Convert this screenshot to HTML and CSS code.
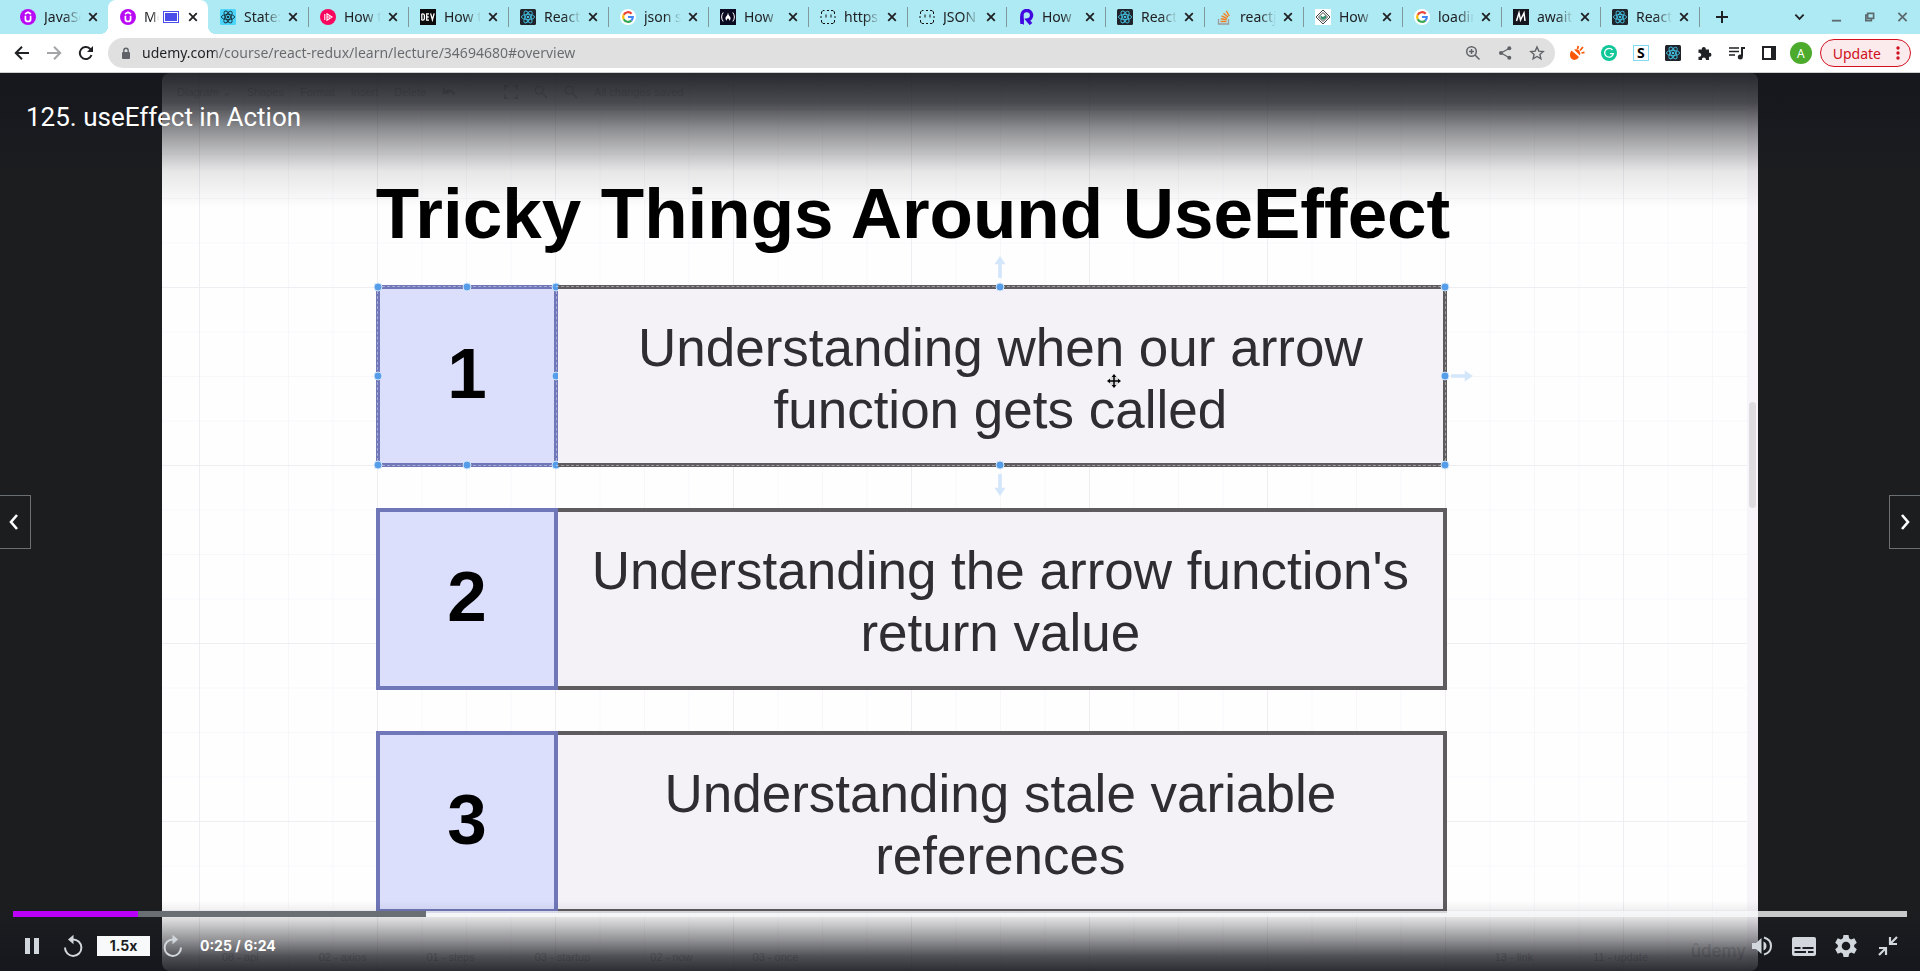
FILE: index.html
```html
<!DOCTYPE html>
<html lang="en">
<head>
<meta charset="utf-8">
<title>125. useEffect in Action</title>
<meta name="viewport" content="width=device-width, initial-scale=1">
<link rel="stylesheet" href="styles.css">
</head>
<body>
<svg class="defs" aria-hidden="true">
  <symbol id="x" viewBox="0 0 10 10"><path d="M1.2 1.2l7.6 7.6M8.8 1.2L1.2 8.8" fill="none" stroke="currentColor" stroke-width="1.8"/></symbol>
  <symbol id="udemy" viewBox="0 0 16 16"><circle cx="8" cy="8" r="8" fill="#b90af5"/><path d="M5.4 6.8v3.4q0 2.3 2.6 2.3t2.6-2.3V6.8M5 5l3-1.7L11 5" fill="none" stroke="#fff" stroke-width="1.7"/></symbol>
  <symbol id="atom" viewBox="0 0 16 16"><g fill="none" stroke="currentColor" stroke-width=".9"><ellipse cx="8" cy="8" rx="6.6" ry="2.6"/><ellipse cx="8" cy="8" rx="6.6" ry="2.6" transform="rotate(60 8 8)"/><ellipse cx="8" cy="8" rx="6.6" ry="2.6" transform="rotate(120 8 8)"/></g><circle cx="8" cy="8" r="1.3" fill="currentColor"/></symbol>
  <symbol id="react-light" viewBox="0 0 16 16"><rect width="16" height="16" rx="1.5" fill="#4bd5fb"/><use href="#atom" color="#17343d"/></symbol>
  <symbol id="react-dark" viewBox="0 0 16 16"><rect width="16" height="16" rx="1.5" fill="#20232a"/><use href="#atom" color="#43bfe0"/></symbol>
  <symbol id="google" viewBox="0 0 16 16"><circle cx="8" cy="8" r="8" fill="#fff"/><g fill="none" stroke-width="2.2"><path d="M11.6 4.7A4.9 4.9 0 0 0 3.7 5.8" stroke="#ea4335"/><path d="M3.7 5.8a4.9 4.9 0 0 0 0 4.4" stroke="#fbbc05"/><path d="M3.7 10.2a4.9 4.9 0 0 0 7.6 1.4" stroke="#34a853"/><path d="M11.3 11.6A4.9 4.9 0 0 0 12.8 8H8" stroke="#4285f4"/></g></symbol>
  <symbol id="video" viewBox="0 0 16 16"><circle cx="8" cy="8" r="8" fill="#f9075e"/><path d="M4.8 5v6M7 4.8v6.4L12 8zM7 8h3" fill="none" stroke="#fff" stroke-width="1.1"/></symbol>
  <symbol id="dev" viewBox="0 0 16 16"><rect width="16" height="16" fill="#0b0b0b"/><path d="M1.8 4.8v6.4M1.8 4.8h.9q1.7 0 1.7 1.7v3q0 1.7-1.7 1.7h-.9M9 4.8H6.7v6.4H9M6.7 8h2M10.6 4.4l1.8 6.4 1.8-6.4" fill="none" stroke="#fff" stroke-width="1.3"/></symbol>
  <symbol id="fcc" viewBox="0 0 16 16"><rect width="16" height="16" fill="#0a0a23"/><path d="M3.2 3.5Q0 8 3.2 12.5M12.8 3.5q3.2 4.5 0 9" fill="none" stroke="#fff" stroke-width="1"/><path d="M8 3.6q-.2 2.2-1.7 3.7-1.8 2 .1 4.4Q7 10 8 9.3q1 .7 1.600 2.400 1.900-2.400.1-4.400Q8.300 6 8 3.600z" fill="#fff"/></symbol>
  <symbol id="json" viewBox="0 0 16 16"><path d="M4.500 1.500H3L1.500 3v2M1 7v2M1.500 11v2L3 14.500h2M7 14.500h2M11 14.500h2l1.500-1.500v-2M15 7v2M14.500 5V3L13 1.500h-2M7 1.500h2" fill="none" stroke="#111" stroke-width="1"/><path d="M6 5.500v3M11 5.500v3" stroke="#111"/></symbol>
  <symbol id="rails" viewBox="0 0 16 16"><path d="M4 15V6.500A4.800 4.800 0 1 1 9.500 11L13 15" fill="none" stroke="#4208e0" stroke-width="3.400"/><circle cx="7.500" cy="6" r="1.500" fill="#aeeaf3"/><path d="M2.300 6.500V13l3.500 3v-6z" fill="#4208e0"/></symbol>
  <symbol id="stack" viewBox="0 0 16 16"><path d="M2.500 10v5h10v-5" fill="none" stroke="#9a9b9e" stroke-width="1.300"/><path d="M4.500 12.500h6M4.700 9.800l6 .9M5.600 7l5.500 2.400M7.500 4.200l4.600 3.900M10.300 1.800l3 5.200" stroke="#f48024" stroke-width="1.400" fill="none"/></symbol>
  <symbol id="diamond" viewBox="0 0 16 16"><rect width="16" height="16" fill="#fff"/><path d="M8 1l7 7-7 7-7-7zM8 3.500L12.500 8 8 12.500 3.500 8z" fill="none" stroke="#444"/><path d="M5.500 6.500L8 8l3-2v3l-3 2-2.500-2z" fill="#35906a"/></symbol>
  <symbol id="medium" viewBox="0 0 16 16"><rect width="16" height="16" fill="#15151d"/><path d="M3.500 12L6 4l1.500 7L11 4l1 8" fill="none" stroke="#fff" stroke-width="1.500"/></symbol>
  <symbol id="arrow" viewBox="0 0 24 24"><path d="M12 0l6 9h-4v15h-4V9H6z" fill="#d3e6fa"/></symbol>
</svg>

<header class="browser">
  <nav class="tabs" aria-label="Tabs">
    <div class="tab"><svg class="fav"><use href="#udemy"/></svg><span class="tab-name">JavaScript</span><button class="close" aria-label="Close tab"><svg><use href="#x"/></svg></button></div>
    <div class="tab active"><svg class="fav"><use href="#udemy"/></svg><span class="tab-name short">Modern</span><i class="pip"></i><button class="close" aria-label="Close tab"><svg><use href="#x"/></svg></button></div>
    <div class="tab"><svg class="fav"><use href="#react-light"/></svg><span class="tab-name">State:</span><button class="close" aria-label="Close tab"><svg><use href="#x"/></svg></button></div>
    <div class="tab sep"><svg class="fav"><use href="#video"/></svg><span class="tab-name">How to</span><button class="close" aria-label="Close tab"><svg><use href="#x"/></svg></button></div>
    <div class="tab sep"><svg class="fav"><use href="#dev"/></svg><span class="tab-name">How to</span><button class="close" aria-label="Close tab"><svg><use href="#x"/></svg></button></div>
    <div class="tab sep"><svg class="fav"><use href="#react-dark"/></svg><span class="tab-name">React</span><button class="close" aria-label="Close tab"><svg><use href="#x"/></svg></button></div>
    <div class="tab sep"><svg class="fav"><use href="#google"/></svg><span class="tab-name">json se</span><button class="close" aria-label="Close tab"><svg><use href="#x"/></svg></button></div>
    <div class="tab sep"><svg class="fav"><use href="#fcc"/></svg><span class="tab-name">How</span><button class="close" aria-label="Close tab"><svg><use href="#x"/></svg></button></div>
    <div class="tab sep"><svg class="fav"><use href="#json"/></svg><span class="tab-name">https:</span><button class="close" aria-label="Close tab"><svg><use href="#x"/></svg></button></div>
    <div class="tab sep"><svg class="fav"><use href="#json"/></svg><span class="tab-name">JSON</span><button class="close" aria-label="Close tab"><svg><use href="#x"/></svg></button></div>
    <div class="tab sep"><svg class="fav"><use href="#rails"/></svg><span class="tab-name">How</span><button class="close" aria-label="Close tab"><svg><use href="#x"/></svg></button></div>
    <div class="tab sep"><svg class="fav"><use href="#react-dark"/></svg><span class="tab-name">React</span><button class="close" aria-label="Close tab"><svg><use href="#x"/></svg></button></div>
    <div class="tab sep"><svg class="fav"><use href="#stack"/></svg><span class="tab-name">reactjs</span><button class="close" aria-label="Close tab"><svg><use href="#x"/></svg></button></div>
    <div class="tab sep"><svg class="fav"><use href="#diamond"/></svg><span class="tab-name">How</span><button class="close" aria-label="Close tab"><svg><use href="#x"/></svg></button></div>
    <div class="tab sep"><svg class="fav"><use href="#google"/></svg><span class="tab-name">loading</span><button class="close" aria-label="Close tab"><svg><use href="#x"/></svg></button></div>
    <div class="tab sep"><svg class="fav"><use href="#medium"/></svg><span class="tab-name">await</span><button class="close" aria-label="Close tab"><svg><use href="#x"/></svg></button></div>
    <div class="tab sep"><svg class="fav"><use href="#react-dark"/></svg><span class="tab-name">React</span><button class="close" aria-label="Close tab"><svg><use href="#x"/></svg></button></div>
    <button class="new-tab sep" aria-label="New tab"><svg viewBox="0 0 12 12"><path d="M6 0v12M0 6h12" stroke="currentColor" stroke-width="2"/></svg></button>
    <div class="window-controls">
      <button class="dark" aria-label="Search tabs"><svg viewBox="0 0 12 12"><path d="M1.500 3.500L6 8l4.500-4.500" fill="none" stroke="currentColor" stroke-width="2"/></svg></button>
      <button aria-label="Minimize"><svg viewBox="0 0 12 12"><path d="M1 10h10" stroke="currentColor" stroke-width="2"/></svg></button>
      <button aria-label="Restore"><svg viewBox="0 0 12 12"><path d="M4 2h6.500v5.500H4zM4 4H2v6h6V8" fill="none" stroke="currentColor" stroke-width="1.800"/></svg></button>
      <button aria-label="Close"><svg viewBox="0 0 12 12"><path d="M1.500 1.500l9 9M10.500 1.500l-9 9" stroke="currentColor" stroke-width="2"/></svg></button>
    </div>
  </nav>

  <div class="toolbar">
    <div class="history">
      <button aria-label="Back"><svg viewBox="0 0 16 16"><path d="M15 8H2M8 1.800L1.800 8 8 14.200" fill="none" stroke="currentColor" stroke-width="2"/></svg></button>
      <button class="off" aria-label="Forward"><svg viewBox="0 0 16 16"><path d="M1 8h13M8 1.800L14.200 8 8 14.200" fill="none" stroke="currentColor" stroke-width="2"/></svg></button>
      <button aria-label="Reload"><svg viewBox="0 0 16 16"><path d="M13.500 10A6 6 0 1 1 12 3.700L13.500 5" fill="none" stroke="currentColor" stroke-width="2"/><path d="M15 1v6H9z" fill="currentColor"/></svg></button>
    </div>
    <div class="omnibox">
      <svg class="lock" viewBox="0 0 10 13"><rect x="1" y="5" width="8" height="7" rx="1" fill="#5f6368"/><path d="M2.800 5V3.500a2.200 2.200 0 0 1 4.400 0V5" fill="none" stroke="#5f6368" stroke-width="1.400"/></svg>
      <input class="url" type="text" aria-label="Address" value="udemy.com/course/react-redux/learn/lecture/34694680#overview">
      <button aria-label="Zoom"><svg viewBox="0 0 16 16"><g fill="none" stroke="currentColor" stroke-width="1.500"><circle cx="6.500" cy="6.500" r="4.800"/><path d="M10 10l4.500 4.500M6.500 4v5M4 6.500h5"/></g></svg></button>
      <button aria-label="Share"><svg viewBox="0 0 16 16"><path d="M12 3.500L4 8l8 4.500" fill="none" stroke="currentColor" stroke-width="1.300"/><g fill="currentColor"><circle cx="12.300" cy="3.300" r="2"/><circle cx="4" cy="8" r="2"/><circle cx="12.300" cy="12.700" r="2"/></g></svg></button>
      <button aria-label="Bookmark"><svg viewBox="0 0 16 16"><path d="M8 2l1.800 4.100 4.400.4-3.300 2.900 1 4.400L8 11.500l-3.900 2.300 1-4.400L1.800 6.500l4.400-.4z" fill="none" stroke="currentColor" stroke-width="1.400"/></svg></button>
    </div>
    <div class="extensions">
      <button aria-label="Extension"><svg viewBox="0 0 16 16"><path d="M2.500 5.500l7.500 6.500q-2 3.500-5.500 2.800Q.5 13.500 1 9q.2-2 1.500-3.500zM5 4.500l6 6q.8-3-.8-5T5 4.500z" fill="#fb5607"/><path d="M8.500 4l.8-3M11 5.500L14 2M12.500 8l3-.6" stroke="#fb5607" stroke-width="1.700"/></svg></button>
      <button aria-label="Grammarly"><svg viewBox="0 0 16 16"><circle cx="8" cy="8" r="8" fill="#11c79a"/><path d="M11.500 5A4.400 4.400 0 1 0 12.400 8.700H9" fill="none" stroke="#fff" stroke-width="1.300"/></svg></button>
      <button class="s-ext" aria-label="S extension">S</button>
      <button aria-label="React tools"><svg><use href="#react-dark"/></svg></button>
      <button aria-label="Extensions"><svg viewBox="0 0 16 16"><path d="M1.500 4.500h3.400a2 2 0 1 1 3.800 0H12v3.300a2 2 0 1 1 0 3.900V15H8.800a2 2 0 1 0-3.800 0H1.500v-3.300a2 2 0 1 0 0-3.700z" fill="#202124"/></svg></button>
      <button aria-label="Media"><svg viewBox="0 0 16 16"><path d="M0 3h10M0 6.500h10M0 10h6" stroke="#202124" stroke-width="1.700"/><path d="M16 3h-3v8.500" fill="none" stroke="#202124" stroke-width="2"/><circle cx="11.300" cy="12" r="2.500" fill="#202124"/></svg></button>
      <button aria-label="Side panel"><svg viewBox="0 0 16 16"><path d="M2 2h12v12H2z" fill="none" stroke="#202124" stroke-width="2"/><path d="M10 2h4v12h-4z" fill="#202124"/></svg></button>
      <button class="avatar" aria-label="Profile">A</button>
    </div>
    <button class="update">Update<svg viewBox="0 0 4 14"><g fill="currentColor"><circle cx="2" cy="2" r="1.700"/><circle cx="2" cy="7" r="1.700"/><circle cx="2" cy="12" r="1.700"/></g></svg></button>
  </div>
</header>

<main class="player">
  <section class="slide">
    <div class="menu" aria-hidden="true">
      <span>Diagram ⌄</span><span>Shapes</span><span>Format</span><span>Insert</span><span>Delete</span>
      <svg class="undo" viewBox="0 0 16 16"><path d="M2 3v6h6M2.500 9q6-6 12 2" fill="none" stroke="currentColor" stroke-width="2.500"/></svg>
      <svg viewBox="0 0 16 16"><path d="M1 5V1h4M11 1h4v4M15 11v4h-4M5 15H1v-4" fill="none" stroke="currentColor" stroke-width="2"/></svg>
      <svg viewBox="0 0 16 16"><path d="M10 10l5 5" stroke="currentColor" stroke-width="2"/><circle cx="6" cy="6" r="4.500" fill="none" stroke="currentColor" stroke-width="1.500"/></svg>
      <svg viewBox="0 0 16 16"><path d="M10 10l5 5" stroke="currentColor" stroke-width="2"/><circle cx="6" cy="6" r="4.500" fill="none" stroke="currentColor" stroke-width="1.500"/></svg>
      <span>All changes saved</span>
    </div>
    <h1 class="heading">Tricky Things Around UseEffect</h1>
    <ol class="points">
      <li class="point">
        <div class="num">1<div class="selection left"><i class="h tl"></i><i class="h tc"></i><i class="h tr"></i><i class="h ml"></i><i class="h mr"></i><i class="h bl"></i><i class="h bc"></i><i class="h br"></i></div></div>
        <div class="text">Understanding when our arrow function gets called
          <div class="selection right"><i class="h tc"></i><i class="h tr"></i><i class="h mr"></i><i class="h bc"></i><i class="h br"></i>
            <svg class="arrow up"><use href="#arrow"/></svg><svg class="arrow side"><use href="#arrow"/></svg><svg class="arrow down"><use href="#arrow"/></svg></div>
          <svg class="cursor" viewBox="0 0 14 14"><path d="M7 0l7 7-7 7-7-7z" fill="#d6d5d8"/><path d="M7 2v10M2 7h10" stroke="#000" stroke-width="1.500"/><path d="M7 0l2.300 3H4.700zM7 14l2.300-3H4.700zM0 7l3-2.300v4.600zM14 7l-3-2.300v4.600z" fill="#000"/></svg>
        </div>
      </li>
      <li class="point"><div class="num">2</div><div class="text">Understanding the arrow function's return value</div></li>
      <li class="point"><div class="num">3</div><div class="text">Understanding stale variable references</div></li>
    </ol>
    <div class="sheets" aria-hidden="true"><span>08 - api</span><span>02 - axios</span><span>01 - steps</span><span>03 - startup</span><span>02 - now</span><span>03 - once</span><span class="push">13 - link</span><span>11 - update</span></div>
    <span class="watermark">ûdemy</span>
    <i class="track"><i class="thumb"></i></i>
  </section>

  <div class="shade top"><h2 class="lecture">125. useEffect in Action</h2></div>
  <button class="side-nav prev" aria-label="Previous lecture"><svg viewBox="0 0 12 20"><path d="M9 3L3 10l6 7" fill="none" stroke="currentColor" stroke-width="2.600"/></svg></button>
  <button class="side-nav next" aria-label="Next lecture"><svg viewBox="0 0 12 20"><path d="M3 3l6 7-6 7" fill="none" stroke="currentColor" stroke-width="2.600"/></svg></button>

  <div class="shade bottom">
    <input class="seek" type="range" min="0" max="384" value="25" aria-label="Seek">
    <div class="controls">
      <button aria-label="Pause"><svg viewBox="0 0 24 24"><path d="M5 4h5v16H5zM14 4h5v16h-5z" fill="currentColor"/></svg></button>
      <button aria-label="Rewind"><svg viewBox="0 0 24 24"><path d="M4 13.500A8.200 8.200 0 1 0 12 5.500" fill="none" stroke="currentColor" stroke-width="2"/><path d="M12.500 .8v9.400L7 5.500z" fill="currentColor"/></svg></button>
      <button class="speed">1.5x</button>
      <button aria-label="Forward"><svg viewBox="0 0 24 24"><path d="M20 13.500A8.200 8.200 0 1 1 12 5.500" fill="none" stroke="currentColor" stroke-width="2"/><path d="M11.500 .8v9.400L17 5.500z" fill="currentColor"/></svg></button>
      <span class="time">0:25 / 6:24</span>
      <span class="grow"></span>
      <button aria-label="Mute"><svg viewBox="0 0 24 24"><path d="M2 9v6h4l5.500 5V4L6 9zM13.500 7.500v9q3-1.300 3-4.500t-3-4.500z" fill="currentColor"/><path d="M14 3.500q7 2 7 8.500t-7 8.500" fill="none" stroke="currentColor" stroke-width="2"/></svg></button>
      <button aria-label="Captions"><svg viewBox="0 0 24 24"><rect x="0" y="3" width="24" height="19" rx="2" fill="currentColor"/><path d="M2.500 14h6M10.500 14h11M2.500 18h11.500M16 18h5.500" stroke="#1a1b20" stroke-width="2"/></svg></button>
      <button aria-label="Settings"><svg viewBox="0 0 24 24"><path d="M9.500 1h5l.6 3.300 2 1.200L20.300 4.300l2.500 4.400-2.600 2.200v2.200l2.600 2.200-2.500 4.400-3.200-1.200-2 1.200-.6 3.300h-5l-.6-3.300-2-1.200-3.200 1.200-2.500-4.400 2.600-2.200v-2.200L1.200 8.700l2.500-4.400 3.200 1.200 2-1.200zM12 7.700a4.300 4.300 0 1 0 0 8.600 4.300 4.300 0 0 0 0-8.600z" fill="currentColor" fill-rule="evenodd"/></svg></button>
      <button aria-label="Exit fullscreen"><svg viewBox="0 0 24 24"><path d="M21 3l-6 6M3 21l6-6" stroke="currentColor" stroke-width="2.200"/><path d="M14 3v7h7M10 21v-7H3" fill="none" stroke="currentColor" stroke-width="2.200"/></svg></button>
    </div>
  </div>
</main>
</body>
</html>
```
FILE: styles.css
```css
* { box-sizing: border-box; }
body { margin: 0; height: 100vh; display: flex; flex-direction: column; overflow: hidden; font-family: "Noto Sans", sans-serif; background: #1c1d1f; }
button { border: 0; padding: 0; background: none; color: inherit; font: inherit; display: flex; align-items: center; justify-content: center; flex: none; }
.defs { position: absolute; width: 0; height: 0; }

/* browser chrome */
.tabs { display: flex; height: 34px; padding-left: 8px; background: #aeeaf3; color: #202124; }
.tab { position: relative; flex: 0 1 100px; min-width: 0; display: flex; align-items: center; padding: 0 10px 0 12px; }
.tab:nth-child(n+9) { flex-basis: 99px; }
.sep { background: linear-gradient(#7f989d, #7f989d) 0 50% / 1px 20px no-repeat; }
.tab.active { background: #fff; border-radius: 8px 8px 0 0; }
.tab.active::before, .tab.active::after { content: ""; position: absolute; bottom: 0; width: 8px; height: 8px; }
.tab.active::before { left: -8px; background: radial-gradient(circle at 0 0, transparent 8px, #fff 8px); }
.tab.active::after { right: -8px; background: radial-gradient(circle at 100% 0, transparent 8px, #fff 8px); }
.fav { width: 16px; height: 16px; flex: none; margin-right: 8px; }
.tab-name { flex: 1; min-width: 0; margin-right: 7px; overflow: hidden; white-space: nowrap; font-size: 14px; line-height: 20px; -webkit-mask-image: linear-gradient(90deg, #000 55%, transparent); mask-image: linear-gradient(90deg, #000 55%, transparent); }
.tab-name.short { margin-right: 4px; }
.pip { width: 16px; height: 12px; margin-right: 9px; flex: none; background: #4a4de7; border: 1px solid #4a4de7; box-shadow: inset 0 0 0 1px #fff; }
.close svg { width: 10px; height: 10px; }
.new-tab { width: 46px; }
.new-tab svg { width: 12px; height: 12px; }
.window-controls { margin-left: auto; display: flex; align-items: center; gap: 22px; padding-right: 12px; color: #5d6b70; }
.window-controls .dark { color: #202124; margin-right: 4px; }
.window-controls svg { width: 11px; height: 12px; }

.toolbar { display: flex; align-items: center; height: 39px; padding: 0 9px 0 14px; background: #fff; border-bottom: 1px solid #cfcfd2; color: #202124; }
.history { display: flex; gap: 16px; }
.history svg { width: 16px; height: 16px; display: block; }
.off { color: #a4a5a8; }
.omnibox { flex: 1; display: flex; align-items: center; gap: 16px; height: 30px; margin-left: 14px; padding: 0 10px 0 13px; border-radius: 15px; background: #e0e0e0; color: #5f6368; }
.omnibox button svg { width: 16px; height: 16px; }
.lock { width: 10px; height: 13px; margin-right: -5px; flex: none; }
.url { flex: 1; min-width: 0; border: 0; padding: 0; outline: 0; font-family: inherit; font-size: 14px; line-height: 20px; color: transparent; background: linear-gradient(90deg, #202124 73px, #66696d 73px); -webkit-background-clip: text; background-clip: text; }
.extensions { display: flex; align-items: center; gap: 16px; margin-left: 14px; }
.extensions svg { width: 16px; height: 16px; display: block; }
.s-ext { width: 16px; height: 16px; border: 1px solid #86d9f5; font: bold 14px/14px "Noto Sans", sans-serif; color: #000; }
.avatar { width: 22px; height: 22px; margin-left: -3px; border-radius: 50%; background: #4caa2c; color: #fff; font-size: 12px; }
.update { height: 28px; margin-left: 8px; padding: 0 10px 0 12px; gap: 15px; border: 1px solid #d4101f; border-radius: 14px; background: #fcebec; color: #cf1020; font-size: 14px; }
.update svg { width: 4px; height: 14px; }

/* lecture video */
.player { position: relative; flex: 1; min-height: 0; display: flex; justify-content: center; background: #1c1d1f; }
.slide {
  position: relative; width: 83.125%; overflow: hidden; border-radius: 8px; color: #2f2d31;
  font-family: "Liberation Sans", Arial, sans-serif;
  background:
    linear-gradient(90deg, #efedf1 1px, transparent 1px) 37px 0 / 178px 178px,
    linear-gradient(#efedf1 1px, transparent 1px) 0 36px / 178px 178px,
    linear-gradient(90deg, #f8f6f9 1px, transparent 1px) 37px 0 / 44.5px 44.5px,
    linear-gradient(#f8f6f9 1px, transparent 1px) 0 36px / 44.5px 44.5px,
    #fefefe;
}
.menu { display: flex; align-items: center; gap: 16px; height: 38px; padding-left: 15px; font-size: 11px; color: #d0d0d0; }
.menu svg { width: 14px; height: 14px; }
.menu .undo { margin-right: 32px; }
.heading { margin: 61px 0 0 13.4%; font-size: 71px; line-height: 84px; color: #000; white-space: nowrap; }
.points { list-style: none; width: 67.1%; margin: 29px 0 0 13.4%; padding: 0; display: grid; gap: 41px; }
.point { display: flex; height: 182px; }
.num { position: relative; width: 17%; display: flex; align-items: center; justify-content: center; padding-bottom: 6px; border: 4px solid #7077b8; background: #dbdffc; color: #000; font-size: 71px; font-weight: bold; }
.text { position: relative; flex: 1; display: flex; align-items: center; justify-content: center; padding: 6px 20px 0; border: 4px solid #5f5c60; border-left: 0; background: #f4f2f6; font-size: 53px; line-height: 62px; text-align: center; }
.selection { position: absolute; inset: -3px; border: 1px dashed rgba(255, 255, 255, .4); }
.selection.right { left: -2px; border-left: 0; }
.h { position: absolute; width: 9px; height: 9px; border: 1px solid #d5e7fb; border-radius: 50%; background: #569de9; transform: translate(-50%, -50%); }
.tl, .tc, .tr { top: 0; }
.ml, .mr { top: 50%; }
.bl, .bc, .br { top: 100%; }
.tl, .ml, .bl { left: 0; }
.tc, .bc { left: 50%; }
.tr, .mr, .br { left: 100%; }
.arrow { position: absolute; width: 22px; height: 22px; }
.up { left: calc(50% - 11px); top: -31px; }
.down { left: calc(50% - 11px); bottom: -31px; transform: rotate(180deg); }
.side { right: -28px; top: calc(50% - 11px); transform: rotate(90deg); }
.cursor { position: absolute; left: 62%; top: 49%; width: 14px; height: 14px; }
.sheets { position: absolute; left: 60px; right: 110px; bottom: 8px; display: flex; gap: 60px; font-size: 11px; color: #c4c4c4; }
.push { margin-left: auto; }
.watermark { position: absolute; right: 12px; bottom: 9px; font: 500 17px/22px Inter, sans-serif; color: #d4d4d4; }
.track { position: absolute; top: 0; bottom: 0; right: 0; width: 11px; background: #f8f5fa; }
.thumb { position: absolute; top: 329px; left: 2px; width: 7px; height: 106px; border-radius: 4px; background: #e0dde1; }

/* player overlay */
.shade { position: absolute; left: 0; right: 0; color: #fff; }
.shade.top { top: 0; height: 135px; background: linear-gradient(rgba(22, 23, 30, .92), rgba(22, 23, 30, .78) 22%, rgba(22, 23, 30, .48) 42%, rgba(22, 23, 30, .1) 73%, transparent); }
.lecture { margin: 0; padding: 28px 26px; font: 400 26px/32px Roboto, sans-serif; }
.shade.bottom { bottom: 0; padding: 10px 13px 0; background: linear-gradient(transparent, rgba(22, 23, 30, .1) 22%, rgba(22, 23, 30, .46) 55%, rgba(22, 23, 30, .76) 80%, rgba(22, 23, 30, .9)); }
.seek { -webkit-appearance: none; appearance: none; display: block; width: 100%; height: 6px; margin: 0; background: linear-gradient(90deg, #ba00f8 6.6%, #6a6f73 6.6%, #6a6f73 21.8%, rgba(247, 249, 250, .78) 21.8%); }
.seek::-webkit-slider-thumb { -webkit-appearance: none; width: 0; height: 0; }
.controls { display: flex; align-items: center; height: 54px; padding: 4px 7px 0; color: #d1d7dc; font: bold 14px/20px Inter, sans-serif; }
.controls svg { width: 24px; height: 24px; display: block; }
.controls button + button { margin-left: 17px; }
.controls .grow ~ button + button { margin-left: 18px; }
.controls .speed { width: 53px; height: 20px; margin-left: 12px; background: #f7f9fa; color: #1c1d1f; }
.controls .speed + button { margin-left: 11px; }
.time { margin-left: 15px; color: #fff; }
.grow { flex: 1; }
.side-nav { position: absolute; top: 422px; width: 31px; height: 54px; border: 1px solid #6a6f73; background: #1c1d1f; color: #fff; }
.side-nav svg { width: 12px; height: 20px; }
.prev { left: 0; border-left: 0; padding-right: 2px; }
.next { right: 0; border-right: 0; }
```
